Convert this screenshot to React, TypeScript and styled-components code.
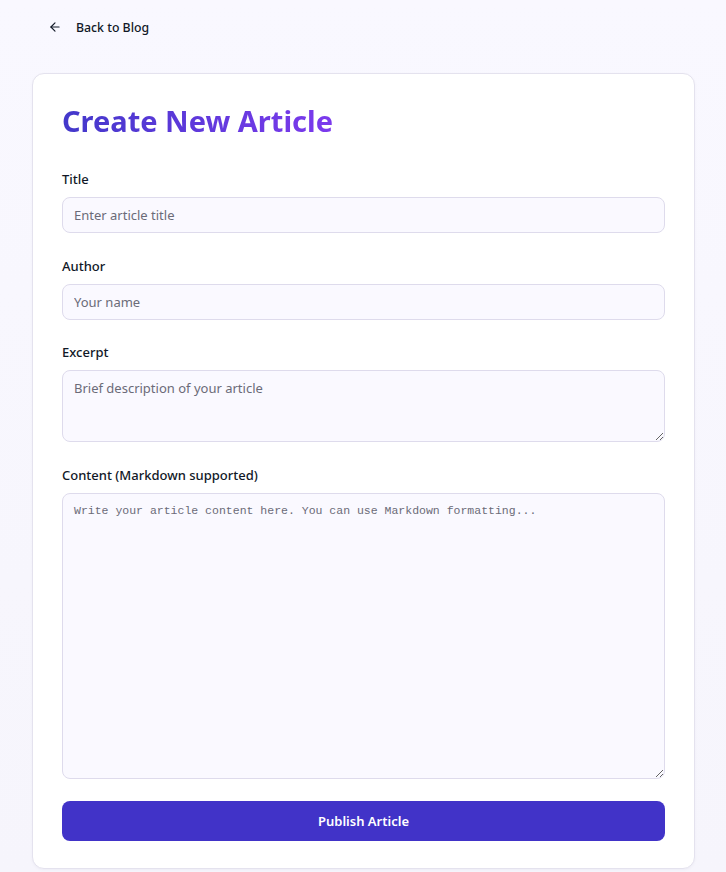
import React, { useState } from 'react';
import styled, { createGlobalStyle } from 'styled-components';
import { ArrowLeft } from 'lucide-react';

const GlobalStyle = createGlobalStyle`
  * {
    box-sizing: border-box;
  }
  body {
    margin: 0;
    background: #f8f7fe;
    font-family: 'Noto Sans', 'Open Sans', sans-serif;
    color: #111827;
  }
`;

const Page = styled.div`
  min-height: 100vh;
  padding: 7px 31px 0 32px;
  background: linear-gradient(180deg, #f9f8ff 0%, #f6f5fc 100%);
`;

const BackButton = styled.button`
  display: inline-flex;
  align-items: center;
  gap: 14px;
  height: 40px;
  padding: 0 16px;
  border: none;
  background: transparent;
  font-family: inherit;
  font-size: 12.3px;
  font-weight: 500;
  color: #111827;
  cursor: pointer;
  svg {
    width: 14px;
    height: 14px;
  }
`;

const Card = styled.div`
  margin-top: 26px;
  background: #ffffff;
  border: 1px solid #e4e2ee;
  border-radius: 12px;
  padding: 29px 29px 27px;
  box-shadow: 0 1px 3px rgba(31, 27, 77, 0.04);
`;

const Heading = styled.h1`
  display: inline-block;
  margin: 0 0 30px;
  font-size: 29px;
  line-height: 36px;
  font-weight: 700;
  background: linear-gradient(90deg, #4338ca 0%, #7c3aed 100%);
  -webkit-background-clip: text;
  background-clip: text;
  color: transparent;
`;

const Form = styled.form`
  display: flex;
  flex-direction: column;
  gap: 22.5px;
`;

const Field = styled.div`
  display: flex;
  flex-direction: column;
`;

const Label = styled.label`
  font-size: 13px;
  line-height: 20px;
  font-weight: 500;
  color: #111827;
  margin-bottom: 8px;
`;

const TextInput = styled.input`
  height: 36px;
  padding: 0 11px;
  border: 1px solid #dedbec;
  border-radius: 8px;
  background: #faf9ff;
  font-family: inherit;
  font-size: 13px;
  color: #111827;
  outline: none;
  &::placeholder {
    color: #6b6b78;
  }
`;

const TextArea = styled.textarea<{ $height: number; $mono?: boolean }>`
  height: ${(p) => p.$height}px;
  padding: 7px 11px;
  border: 1px solid #dedbec;
  border-radius: 8px;
  background: #faf9ff;
  font-family: ${(p) => (p.$mono ? "'Liberation Mono', 'DejaVu Sans Mono', monospace" : 'inherit')};
  font-size: ${(p) => (p.$mono ? '11.5px' : '13px')};
  line-height: 20px;
  color: #111827;
  resize: vertical;
  outline: none;
  &::placeholder {
    color: #6b6b78;
  }
`;

const SubmitButton = styled.button`
  height: 40px;
  border: none;
  border-radius: 8px;
  background: #4133c8;
  color: #ffffff;
  font-family: inherit;
  font-size: 13px;
  font-weight: 600;
  cursor: pointer;
`;

const App: React.FC = () => {
  const [title, setTitle] = useState('');
  const [author, setAuthor] = useState('');
  const [excerpt, setExcerpt] = useState('');
  const [content, setContent] = useState('');

  return (
    <>
      <GlobalStyle />
      <Page>
        <BackButton type="button">
          <ArrowLeft strokeWidth={2} />
          Back to Blog
        </BackButton>
        <Card>
          <Heading>Create New Article</Heading>
          <Form onSubmit={(e) => e.preventDefault()}>
            <Field>
              <Label htmlFor="title">Title</Label>
              <TextInput
                id="title"
                placeholder="Enter article title"
                value={title}
                onChange={(e) => setTitle(e.target.value)}
              />
            </Field>
            <Field>
              <Label htmlFor="author">Author</Label>
              <TextInput
                id="author"
                placeholder="Your name"
                value={author}
                onChange={(e) => setAuthor(e.target.value)}
              />
            </Field>
            <Field>
              <Label htmlFor="excerpt">Excerpt</Label>
              <TextArea
                id="excerpt"
                $height={72}
                placeholder="Brief description of your article"
                value={excerpt}
                onChange={(e) => setExcerpt(e.target.value)}
              />
            </Field>
            <Field>
              <Label htmlFor="content">Content (Markdown supported)</Label>
              <TextArea
                id="content"
                $height={286}
                $mono
                placeholder="Write your article content here. You can use Markdown formatting..."
                value={content}
                onChange={(e) => setContent(e.target.value)}
              />
            </Field>
            <SubmitButton type="submit">Publish Article</SubmitButton>
          </Form>
        </Card>
      </Page>
    </>
  );
};

export default App;
